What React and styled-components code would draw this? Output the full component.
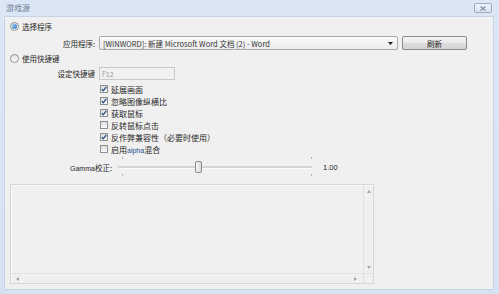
import React from "react";
import styled, { createGlobalStyle } from "styled-components";

const GlobalStyle = createGlobalStyle`
  html, body {
    margin: 0;
    padding: 0;
    background: #d9e5f3;
  }
  body {
    font-family: "Noto Sans CJK SC", "Liberation Sans", sans-serif;
    color: #1f1f1f;
  }
`;

const Frame = styled.div`
  width: 499px;
  height: 294px;
  box-sizing: border-box;
  display: flex;
  flex-direction: column;
  background: linear-gradient(#dce7f5, #d4e2f2);
  padding: 0 5px 4px 4px;
`;

const TitleBar = styled.div`
  height: 16px;
  display: flex;
  align-items: flex-start;
  justify-content: space-between;
  padding: 0 2px;
  flex-shrink: 0;
`;

const TitleText = styled.span`
  font-size: 8px;
  line-height: 16px;
  color: #6a7b93;
`;

const CloseButton = styled.div`
  margin-top: 3px;
  width: 18px;
  height: 10px;
  box-sizing: border-box;
  border: 1px solid #9aabc1;
  border-radius: 2px;
  background: linear-gradient(#f1f5fa, #dbe4ef);
  display: flex;
  align-items: center;
  justify-content: center;
`;

const Body = styled.div`
  flex: 1;
  background: #f0f0f0;
  border: 1px solid #c6d4e4;
  display: flex;
  flex-direction: column;
  padding: 0 0 5px 0;
  min-height: 0;
`;

const RadioRow = styled.label`
  display: flex;
  align-items: center;
  gap: 3px;
  height: 12px;
  margin-top: ${(p) => p.$top}px;
  padding-left: 5px;
  font-size: 7.5px;
`;

const Radio = styled.span`
  width: 9px;
  height: 9px;
  box-sizing: border-box;
  border-radius: 50%;
  border: 1px solid #8e9092;
  background: linear-gradient(#e2e2e2, #ffffff);
  display: flex;
  align-items: center;
  justify-content: center;
  &::after {
    content: "";
    width: 5px;
    height: 5px;
    border-radius: 50%;
    display: ${(p) => (p.$on ? "block" : "none")};
    background: radial-gradient(circle at 35% 35%, #8cc4f6, #1f62b8);
  }
`;

const FieldRow = styled.div`
  display: flex;
  align-items: center;
  height: ${(p) => p.$h}px;
  margin-top: ${(p) => p.$top}px;
  padding-left: 52px;
  gap: 4px;
`;

const FieldLabel = styled.span`
  width: 38px;
  text-align: right;
  font-size: 7.5px;
  white-space: nowrap;
`;

const Select = styled.div`
  width: 299px;
  height: 14px;
  box-sizing: border-box;
  border: 1px solid #a9a9a9;
  border-radius: 2px;
  background: linear-gradient(#fbfbfb, #ececec);
  display: flex;
  align-items: center;
  justify-content: space-between;
  padding: 0 4px 0 3px;
  font-size: 7.5px;
  white-space: nowrap;
  color: #333;
`;

const Button = styled.div`
  width: 65px;
  height: 14px;
  box-sizing: border-box;
  border: 1px solid #8a8a8a;
  border-radius: 2px;
  background: linear-gradient(#f6f6f6 0%, #e9e9e9 50%, #dcdcdc 51%, #d4d4d4 100%);
  display: flex;
  align-items: center;
  justify-content: center;
  font-size: 7.5px;
`;

const TextInput = styled.div`
  width: 76px;
  height: 13px;
  box-sizing: border-box;
  border: 1px solid #c8c8c8;
  background: #f0f0f0;
  display: flex;
  align-items: center;
  padding-left: 2px;
  font-size: 7px;
  color: #9a9a9a;
`;

const CheckList = styled.div`
  display: flex;
  flex-direction: column;
  margin-top: 3px;
  padding-left: 95px;
`;

const CheckRow = styled.label`
  display: flex;
  align-items: center;
  gap: 3px;
  height: 12px;
  font-size: 8px;
  white-space: nowrap;
`;

const Box = styled.span`
  width: 8px;
  height: 8px;
  box-sizing: border-box;
  border: 1px solid #8e9092;
  background: linear-gradient(#dcdcdc, #fbfbfb);
  display: flex;
  align-items: center;
  justify-content: center;
`;

const Latin = styled.span`
  font-family: "Liberation Sans", sans-serif;
  font-size: 7px;
  color: ${(p) => p.$color || "#2a4d8a"};
`;

const GammaRow = styled.div`
  display: flex;
  align-items: center;
  height: 22px;
  margin-top: 1px;
  padding-left: 63px;
`;

const GammaLabel = styled.span`
  width: 44px;
  text-align: right;
  font-size: 7.5px;
  white-space: nowrap;
`;

const Slider = styled.div`
  position: relative;
  width: 194px;
  height: 22px;
  margin-left: 6px;
`;

const Track = styled.div`
  position: absolute;
  left: 0;
  right: 0;
  top: 10px;
  height: 2px;
  background: #d4d4d4;
  border-bottom: 1px solid #fafafa;
`;

const Tick = styled.div`
  position: absolute;
  width: 1px;
  height: 2px;
  background: #b0b0b0;
  left: ${(p) => p.$x}px;
  top: ${(p) => (p.$below ? 18 : 1)}px;
`;

const Thumb = styled.div`
  position: absolute;
  top: 5px;
  width: 7px;
  height: 12px;
  box-sizing: border-box;
  border: 1px solid #8a8a8a;
  border-radius: 2px;
  background: linear-gradient(90deg, #f8f8f8, #dadada);
`;

const GammaValue = styled.span`
  margin-left: 11px;
  font-family: "Liberation Sans", sans-serif;
  font-size: 7.5px;
`;

const Panel = styled.div`
  margin: 6px 0 0 5px;
  width: 364px;
  height: 100px;
  box-sizing: border-box;
  border: 1px solid #d6d6d6;
  box-shadow: inset 1px 1px 0 #fbfbfb;
  display: grid;
  grid-template-columns: 1fr 10px;
  grid-template-rows: 1fr 10px;
`;

const VScroll = styled.div`
  border-left: 1px solid #e2e2e2;
  display: flex;
  flex-direction: column;
  align-items: center;
  justify-content: space-between;
  padding: 5px 0 3px;
`;

const HScroll = styled.div`
  border-top: 1px solid #e2e2e2;
  display: flex;
  align-items: center;
  justify-content: space-between;
  padding: 0 5px 0 5px;
`;

const Corner = styled.div`
  border-top: 1px solid #e2e2e2;
  border-left: 1px solid #e2e2e2;
`;

const Arrow = ({ dir }) => {
  const pts = {
    up: "0,3 2,0 4,3",
    down: "0,0 2,3 4,0",
    left: "3,0 0,2 3,4",
    right: "0,0 3,2 0,4",
  }[dir];
  return (
    <svg width="4" height="4" viewBox="0 0 4 4">
      <polygon points={pts} fill="#a4a4a4" />
    </svg>
  );
};

const CheckMark = () => (
  <svg width="6" height="6" viewBox="0 0 6 6">
    <path d="M0.8 3.2 L2.3 4.8 L5.3 0.9" fill="none" stroke="#2c4a7e" strokeWidth="1.3" />
  </svg>
);

const options = [
  { label: "延展画面", on: true },
  { label: "忽略图像纵横比", on: true },
  { label: "获取鼠标", on: true },
  { label: "反转鼠标点击", on: false },
  { label: "反作弊兼容性（必要时使用）", on: true },
  {
    label: (
      <>
        启用<Latin>alpha</Latin>混合
      </>
    ),
    on: false,
  },
];

const gamma = 0.41;

export default function App() {
  return (
    <>
      <GlobalStyle />
      <Frame>
        <TitleBar>
          <TitleText>游戏源</TitleText>
          <CloseButton>
            <svg width="6" height="5" viewBox="0 0 6 5">
              <path d="M0.5 0.5 L5.5 4.5 M5.5 0.5 L0.5 4.5" stroke="#7d8ea6" strokeWidth="1.2" />
            </svg>
          </CloseButton>
        </TitleBar>
        <Body>
          <RadioRow $top={3}>
            <Radio $on />
            选择程序
          </RadioRow>
          <FieldRow $top={4} $h={14}>
            <FieldLabel>应用程序:</FieldLabel>
            <Select>
              <span>[WINWORD]: 新建 Microsoft Word 文档 (2) - Word</span>
              <svg width="5" height="3" viewBox="0 0 5 3">
                <polygon points="0,0 5,0 2.5,3" fill="#1a1a1a" />
              </svg>
            </Select>
            <Button>刷新</Button>
          </FieldRow>
          <RadioRow $top={2}>
            <Radio />
            使用快捷键
          </RadioRow>
          <FieldRow $top={3} $h={13}>
            <FieldLabel>设定快捷键</FieldLabel>
            <TextInput>F12</TextInput>
          </FieldRow>
          <CheckList>
            {options.map((o, i) => (
              <CheckRow key={i}>
                <Box>{o.on && <CheckMark />}</Box>
                <span>{o.label}</span>
              </CheckRow>
            ))}
          </CheckList>
          <GammaRow>
            <GammaLabel>
              <Latin $color="#1f1f1f">Gamma</Latin>校正:
            </GammaLabel>
            <Slider>
              <Tick $x={4} />
              <Tick $x={4} $below />
              <Tick $x={193} />
              <Tick $x={193} $below />
              <Track />
              <Thumb style={{ left: `${Math.round(gamma * 194) - 3}px` }} />
            </Slider>
            <GammaValue>1.00</GammaValue>
          </GammaRow>
          <Panel>
            <div />
            <VScroll>
              <Arrow dir="up" />
              <Arrow dir="down" />
            </VScroll>
            <HScroll>
              <Arrow dir="left" />
              <Arrow dir="right" />
            </HScroll>
            <Corner />
          </Panel>
        </Body>
      </Frame>
    </>
  );
}
